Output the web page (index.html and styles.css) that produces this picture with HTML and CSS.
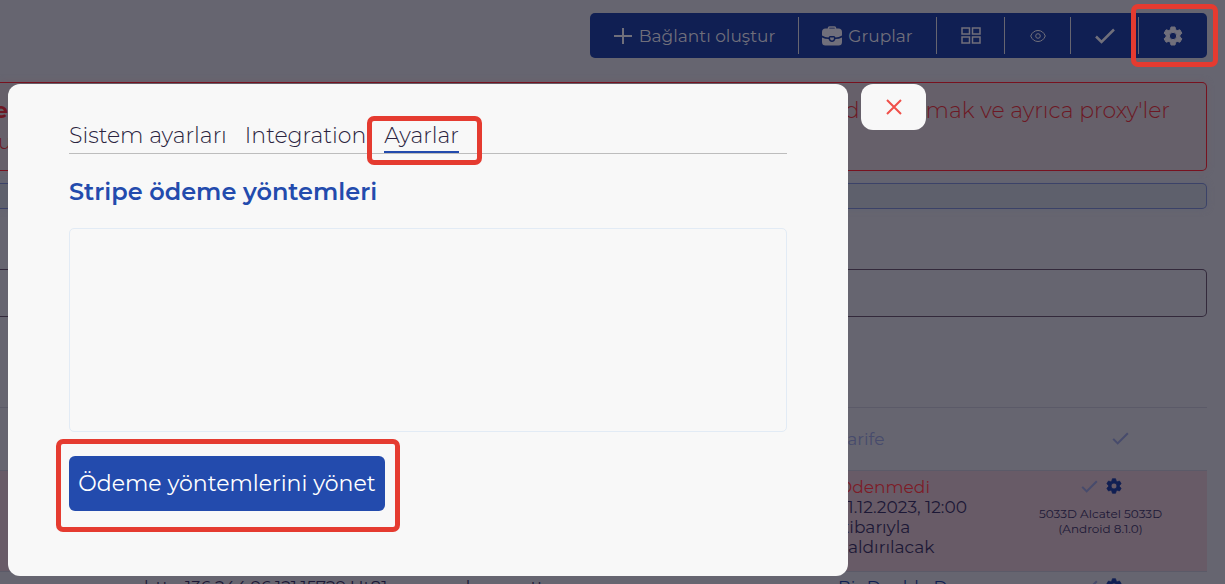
FILE: index.html
```html
<!DOCTYPE html>
<html lang="tr">
<head>
<meta charset="utf-8">
<title>Ayarlar</title>
<link rel="stylesheet" href="styles.css">
</head>
<body>
<svg class="symbols" aria-hidden="true">
  <symbol id="gear" viewBox="0 0 20 20"><path fill="currentColor" stroke="currentColor" stroke-linejoin="round" fill-rule="evenodd" d="M8 1h4l.6 2.700 1.600.9 2.700-.8 2 3.400-2 1.900v1.800l2 1.900-2 3.400-2.700-.8-1.600.9L12 19H8l-.6-2.700-1.600-.9-2.700.8-2-3.400 2-1.900V9.100l-2-1.900 2-3.400 2.700.8 1.600-.9zM10 6.300a3.700 3.700 0 1 0 0 7.400 3.700 3.700 0 0 0 0-7.400z"/></symbol>
  <symbol id="check" viewBox="0 0 20 16"><path fill="none" stroke="currentColor" stroke-width="2.500" d="M1 8.500l5.500 5.500L19 1.500"/></symbol>
</svg>
<div class="page">
  <header class="top">
    <nav class="toolbar">
      <button class="tool tool-create"><svg width="20" height="18" viewBox="0 0 20 18"><path fill="none" stroke="currentColor" stroke-width="2" d="M10 1v16M1 9h18"/></svg>Bağlantı oluştur</button>
      <button class="tool tool-groups"><svg width="20" height="20" viewBox="0 0 20 20"><path fill="none" stroke="currentColor" stroke-width="1.500" d="M6.500 3V2q0-1 1-1h5q1 0 1 1v1"/><path fill="currentColor" d="M3.500 2.500h13Q20 2.500 20 6v3.500q-3 2-6.500 2-.5-1.500-1.500-1.500H8q-1 0-1.500 1.500Q3 11.500 0 9.500V6q0-3.500 3.500-3.500zM0 11.500q3 1.500 6.500 1.500 1 3 3.500 3t3.500-3q3.500 0 6.500-1.500V16q0 3.500-3.500 3.500h-13Q0 19.500 0 16z"/><path fill="currentColor" d="M8 11.500h4q0 3-2 3t-2-3z"/></svg>Gruplar</button>
      <button class="tool tool-grid" aria-label="Izgara"><svg width="20" height="17" viewBox="0 0 20 17"><path fill="none" stroke="currentColor" stroke-width="1.500" d="M1 1h7.500v6H1zM11.500 1H19v6h-7.500zM1 10h7.500v6H1zM11.500 10H19v6h-7.500z"/></svg></button>
      <button class="tool tool-eye" aria-label="Göster"><svg width="16" height="14" viewBox="0 0 16 14"><g fill="none" stroke="currentColor"><path d="M.7 7C2 3.500 4.700 1.500 8 1.500s6 2 7.300 5.500c-1.300 3.500-4 5.500-7.300 5.500S2 10.500.7 7z"/><circle cx="8" cy="7" r="2.300"/></g></svg></button>
      <button class="tool tool-check" aria-label="Seç"><svg width="20" height="16"><use href="#check"/></svg></button>
      <button class="tool tool-settings" aria-label="Ayarlar"><svg width="20" height="20"><use href="#gear"/></svg></button>
    </nav>
  </header>
  <main>
    <section class="box alert">
      <p class="alert-title"><strong>e</strong><span class="alert-end"><span>d</span><span>mak ve ayrıca proxy'ler</span></span></p>
      <p class="alert-note">u</p>
    </section>
    <section class="box info"></section>
    <section class="box filter"></section>
    <table class="links">
      <colgroup><col class="col-address"><col class="col-plan"><col class="col-device"></colgroup>
      <thead><tr><th></th><th>Tarife</th><th class="center"><svg width="17" height="13"><use href="#check"/></svg></th></tr></thead>
      <tbody>
        <tr class="unpaid">
          <td></td>
          <td><span class="status">Ödenmedi</span><br>31.12.2023, 12:00<br>itibarıyla<br>kaldırılacak</td>
          <td class="center"><div class="actions"><svg width="17" height="13"><use href="#check"/></svg><svg class="blue" width="16" height="16"><use href="#gear"/></svg></div><div class="device">5033D Alcatel 5033D<br>(Android 8.1.0)</div></td>
        </tr>
        <tr class="next">
          <td class="address"><span class="fields"><span>http 136.244.96.121:15729:Ht81</span><span>nd</span><span>tt</span></span></td>
          <td class="blue">Bir Double D</td>
          <td class="center"><div class="actions"><svg width="17" height="13"><use href="#check"/></svg><svg class="blue" width="16" height="16"><use href="#gear"/></svg></div></td>
        </tr>
      </tbody>
    </table>
  </main>
</div>
<div class="toolbar-mark"></div>
<div class="overlay">
  <div class="modal" role="dialog" aria-labelledby="modal-title">
    <nav class="tabs">
      <a href="#system">Sistem ayarları</a>
      <a href="#integration">Integration</a>
      <a class="active" href="#settings">Ayarlar</a>
    </nav>
    <h2 id="modal-title">Stripe ödeme yöntemleri</h2>
    <div class="methods"></div>
    <div class="submit"><button class="manage">Ödeme yöntemlerini yönet</button></div>
  </div>
  <button class="close" aria-label="Kapat"><svg width="16" height="16" viewBox="0 0 16 16"><path fill="none" stroke="currentColor" stroke-width="2" d="M1 1l14 14M15 1L1 15"/></svg></button>
</div>
</body>
</html>
```

FILE: styles.css
```css
* { box-sizing: border-box; }
html, body { height: 100%; }
body {
  margin: 0;
  position: relative;
  overflow: hidden;
  background: #666570;
  color: #1c1836;
  font-family: Montserrat, Inter, "Open Sans", sans-serif;
}
button { font: inherit; border: 0; cursor: pointer; }
p, h2 { margin: 0; }
.symbols { position: absolute; width: 0; height: 0; }
.page { height: 100%; overflow: hidden; padding: 13px 18px 0 0; }
.top { display: flex; justify-content: flex-end; }
.toolbar {
  display: flex;
  align-items: center;
  height: 45px;
  border-radius: 5px;
  background: #101f53;
}
.tool {
  display: flex;
  align-items: center;
  justify-content: center;
  gap: 6px;
  height: 37px;
  padding: 0;
  background: none;
  color: #706f7b;
  font-size: 17px;
  border-left: 1px solid #666570;
}
.tool-create { width: 208px; border-left: 0; }
.tool-groups { width: 138px; }
.tool-grid { width: 68px; }
.tool-eye { width: 66px; }
.tool-check { width: 68px; }
.tool-settings { width: 69px; }
.box { border: 1px solid; border-left: 0; border-radius: 0 5px 5px 0; }
.alert {
  height: 89px;
  margin-top: 24px;
  padding: 13px 36px 0 0;
  border-color: #77121f;
  background: #66606a;
  color: #6d1824;
  box-shadow: 0 0 6px #6c5e69;
}
.alert-title { display: flex; justify-content: space-between; font-size: 22px; line-height: 30px; }
.alert-title strong { margin-left: -6px; }
.alert-end { display: flex; gap: 66px; font-weight: 300; }
.alert-note { margin-left: -2px; font-size: 20px; line-height: 32px; font-weight: 300; }
.info { height: 26px; margin-top: 12px; border-color: #3b4268; background: #5e606c; box-shadow: 0 0 6px #606271; }
.filter { height: 48px; margin-top: 60px; border-color: #33293b; }
.links { width: 100%; margin-top: 90px; border-collapse: collapse; table-layout: fixed; font-size: 17px; line-height: 20px; }
.col-plan { width: 156px; }
.col-device { width: 213px; }
.links tr { border-top: 1px solid #5b5a68; }
.links th { height: 63px; padding: 0; font-weight: 400; text-align: left; color: #474b6c; }
.links td { padding: 6px 0 0; vertical-align: top; white-space: nowrap; }
.links .next td { padding-top: 5px; }
.links .center { text-align: center; }
.links th.center { padding-left: 40px; }
.unpaid { height: 101px; background: #685b67; }
.status { color: #7d1b27; }
.actions { display: flex; align-items: center; justify-content: center; gap: 8px; height: 18px; padding-left: 1px; color: #474b6c; }
.device { margin-top: 11px; font-size: 12px; line-height: 15px; }
.blue, .links td.blue { color: #101f53; }
.links .address { padding-left: 144px; }
.fields { display: flex; justify-content: space-between; max-width: 400px; }
.toolbar-mark {
  position: absolute;
  top: 4px;
  right: 7px;
  width: 87px;
  height: 63px;
  border: 5px solid #e53b30;
  border-radius: 7px;
}
.overlay {
  position: absolute;
  top: 84px;
  left: 8px;
  right: 8px;
  display: flex;
  align-items: flex-start;
  gap: 13px;
}
.modal {
  flex: 0 1 840px;
  padding: 32px 61px 44px;
  border-radius: 12px;
  background: #f8f8f8;
}
.tabs { display: flex; gap: 18px; height: 38px; border-bottom: 1px solid #bdbdbd; }
.tabs a {
  position: relative;
  height: 37px;
  color: #2b2440;
  font-size: 22px;
  font-weight: 300;
  line-height: 40px;
  text-decoration: none;
  white-space: nowrap;
}
.tabs .active { border-bottom: 2px solid #234bad; }
.tabs .active::after {
  content: "";
  position: absolute;
  inset: 0 -23px -14px -17px;
  border: 5px solid #e53b30;
  border-radius: 7px;
}
h2 { margin-top: 22px; color: #234bad; font-size: 24px; font-weight: 600; line-height: 32px; }
.methods { height: 204px; margin-top: 20px; border: 1px solid #e2ebf5; border-radius: 5px; }
.submit { display: flex; width: 344px; height: 93px; margin: 7px 0 0 -13px; padding: 12px 8px; border: 5px solid #e53b30; border-radius: 7px; }
.manage { width: 316px; height: 55px; padding: 0; border-radius: 6px; background: #234bad; color: #fff; font-size: 22px; font-weight: 400; white-space: nowrap; }
.close { display: grid; place-items: center; width: 65px; height: 46px; padding: 0; border-radius: 12px; background: #f8f8f8; color: #f0504a; }
```
